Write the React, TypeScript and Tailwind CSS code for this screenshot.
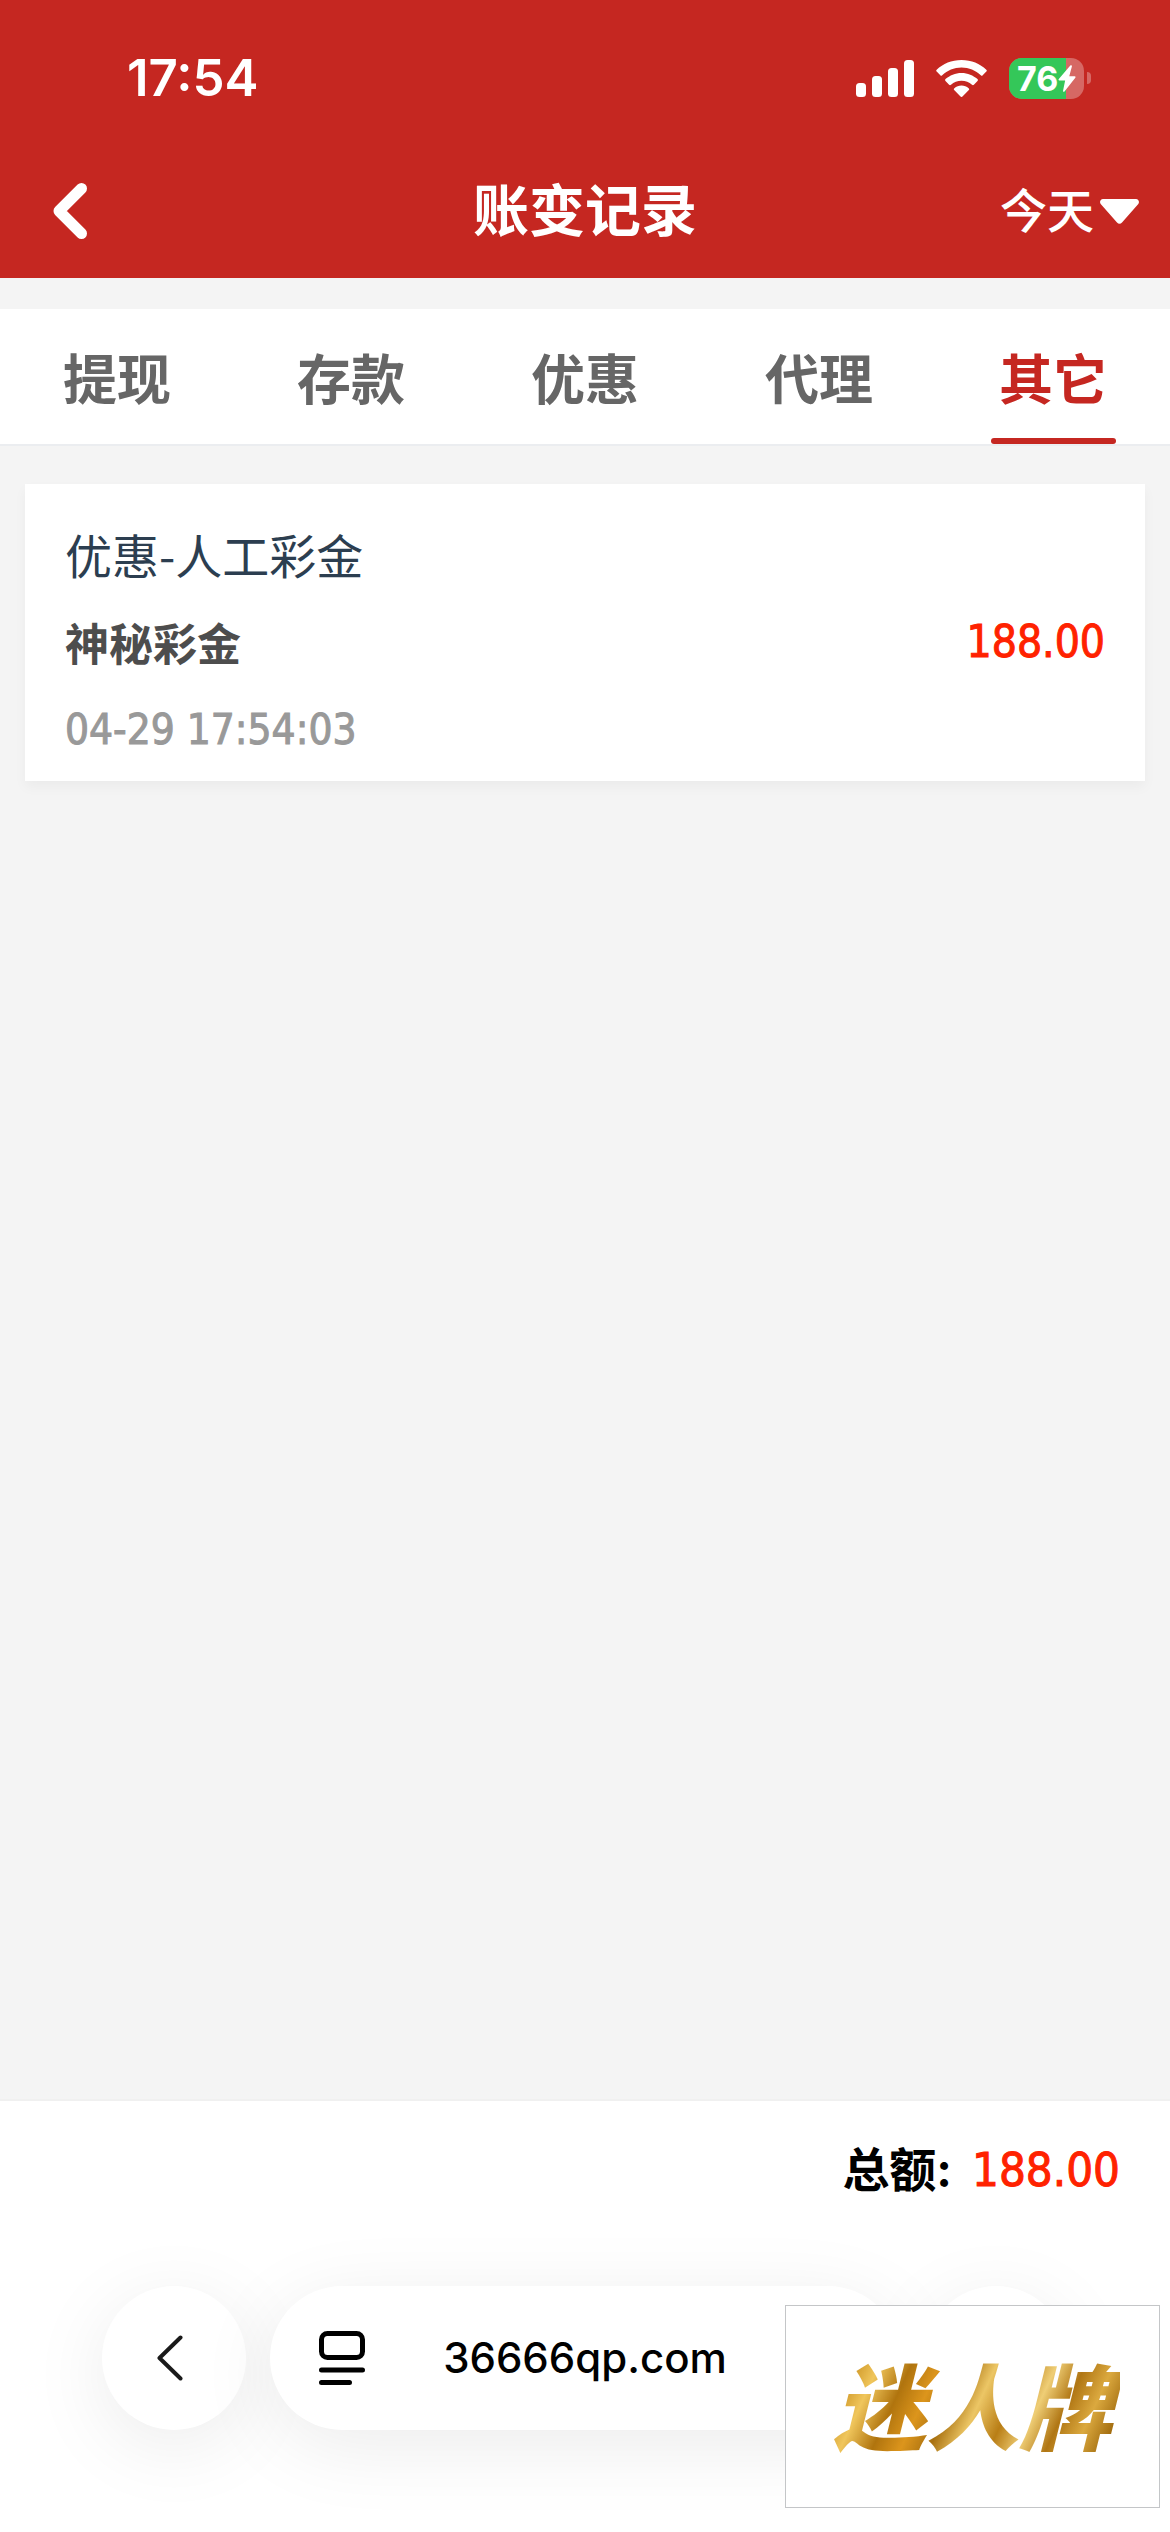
import { useState } from 'react'
import clsx from 'clsx'

const TABS = ['提现', '存款', '优惠', '代理', '其它']

const RECORDS = [
  {
    id: 1,
    type: '优惠-人工彩金',
    title: '神秘彩金',
    time: '04-29 17:54:03',
    amount: 188,
  },
]

const NUMERIC = "font-['DejaVu_Sans_Condensed','DejaVu_Sans',sans-serif]"

function Signal() {
  return (
    <svg width="58" height="37" viewBox="0 0 58 37" fill="#fff" aria-hidden="true">
      <rect x="0" y="23" width="10" height="14" rx="3.5" />
      <rect x="16" y="16" width="10" height="21" rx="3.5" />
      <rect x="32" y="8" width="10" height="29" rx="3.5" />
      <rect x="48" y="0" width="10" height="37" rx="3.5" />
    </svg>
  )
}

function Wifi() {
  return (
    <svg width="51" height="37" viewBox="0 0 51 37" fill="#fff" aria-hidden="true">
      <path d="M25.500 0C35.400 0 44 3.700 50.300 9.700a1.300 1.300 0 0 1 0 1.900l-3.600 3.700a1.300 1.300 0 0 1-1.900 0C39.600 10.300 33 7.400 25.500 7.400S11.400 10.300 6.200 15.300a1.300 1.300 0 0 1-1.900 0L.7 11.600a1.300 1.300 0 0 1 0-1.900C7 3.700 15.600 0 25.500 0z" />
      <path d="M25.500 12.900c6.200 0 11.800 2.400 16 6.200a1.300 1.300 0 0 1 0 1.900l-3.600 3.700a1.400 1.400 0 0 1-1.900 0c-2.800-2.500-6.500-4-10.500-4s-7.700 1.500-10.500 4a1.400 1.400 0 0 1-1.900 0L9.500 21a1.300 1.300 0 0 1 0-1.900c4.200-3.800 9.800-6.200 16-6.200z" />
      <path d="M25.500 25.600c2.700 0 5.200 1 7.100 2.600a1.300 1.300 0 0 1 0 2l-6.100 6.300a1.400 1.400 0 0 1-2 0l-6.100-6.300a1.300 1.300 0 0 1 0-2c1.900-1.600 4.400-2.600 7.100-2.600z" />
    </svg>
  )
}

function Battery({ level }: { level: number }) {
  return (
    <div className="flex items-center gap-[3px]">
      <div className="relative flex h-[41px] w-[75px] items-center overflow-hidden rounded-[13px] bg-white/30 pl-2">
        <div className="absolute inset-y-0 left-0 bg-[#34c759]" style={{ width: `${level}%` }} />
        <span className="relative text-[34px] leading-[41px] font-bold">{level}</span>
        <svg className="relative" width="18" height="27" viewBox="0 0 17 26" fill="#fff" aria-hidden="true">
          <path d="M11.700.6 0.600 13.600c-.5.600-.2 1.300.6 1.300h5.500L4.700 24.700c-.2 1.100.7 1.500 1.400.7L16.500 12.200c.5-.6.200-1.300-.6-1.300h-5.200l2.500-9.500C13.500.3 12.500-.2 11.700.6z" />
        </svg>
      </div>
      <div className="h-3 w-1 rounded-r-full bg-white/30" />
    </div>
  )
}

function StatusBar() {
  return (
    <div className="flex h-36 items-center justify-between pt-3 pr-[79px] pl-[127px]">
      <span className="text-[51px] leading-[60px] font-semibold">17:54</span>
      <div className="flex items-center gap-[22px]">
        <Signal />
        <Wifi />
        <Battery level={76} />
      </div>
    </div>
  )
}

function Header() {
  return (
    <header className="bg-[#c52721] text-white">
      <StatusBar />
      <div className="grid h-[134px] grid-cols-[1fr_auto_1fr] items-center">
        <button type="button" aria-label="返回" className="justify-self-start pl-[53px]">
          <svg width="34" height="56" viewBox="0 0 34 56" fill="none" stroke="#fff" strokeWidth="11" strokeLinecap="round" strokeLinejoin="round">
            <path d="M28.500 5.500 6 28l22.500 22.500" />
          </svg>
        </button>
        <h1 className="text-[56px] leading-[80px] font-bold">账变记录</h1>
        <label className="flex items-center gap-[6px] justify-self-end pr-[31px]">
          <select aria-label="日期" className="appearance-none bg-transparent text-[47px] leading-[68px] font-medium">
            <option>今天</option>
            <option>昨天</option>
          </select>
          <svg width="39" height="25" viewBox="0 0 39 25" fill="#fff" aria-hidden="true">
            <path d="M3 0h33c2.600 0 3.800 3 2.300 5L22 23.500c-1.400 1.600-3.600 1.600-5 0L.7 5C-.8 3 .4 0 3 0z" />
          </svg>
        </label>
      </div>
    </header>
  )
}

function Tabs({ active, onChange }: { active: string; onChange: (tab: string) => void }) {
  return (
    <nav className="mt-[31px] grid grid-cols-5 border-b-2 border-[#ebedf0] bg-white">
      {TABS.map((tab) => (
        <button
          key={tab}
          type="button"
          onClick={() => onChange(tab)}
          className={clsx(
            'flex flex-col items-center pt-8 text-[54px] leading-[80px] font-bold',
            tab === active ? 'text-[#c52721]' : 'text-[#666]',
          )}
        >
          {tab}
          <span className={clsx('mt-[17px] h-[6px] w-[125px] rounded-full', tab === active && 'bg-[#c52721]')} />
        </button>
      ))}
    </nav>
  )
}

function RecordCard({ record }: { record: (typeof RECORDS)[number] }) {
  return (
    <li className="bg-white px-10 pt-[26px] pb-[7px] font-['Noto_Sans_CJK_SC',sans-serif] leading-[88px] shadow-[0_6px_12px_rgba(0,0,0,0.04)]">
      <p className="text-[47px] text-[#2c3e50]">{record.type}</p>
      <div className="flex items-center justify-between">
        <p className="text-[44px] font-bold text-[#4d4d4d]">{record.title}</p>
        <p className={clsx(NUMERIC, 'text-[44px] text-[#ff2200] [-webkit-text-stroke:1px_#ff2200]')}>
          {record.amount.toFixed(2)}
        </p>
      </div>
      <p className={clsx(NUMERIC, 'text-[42px] text-[#999] [-webkit-text-stroke:1px_#999]')}>{record.time}</p>
    </li>
  )
}

function BrowserBar() {
  return (
    <div className="flex gap-6 px-[102px] pt-12 pb-[102px]">
      <button
        type="button"
        aria-label="后退"
        className="flex size-36 items-center justify-center rounded-full bg-white pr-2 shadow-[0_16px_80px_rgba(0,0,0,0.08)]"
      >
        <svg width="26" height="46" viewBox="0 0 26 46" fill="none" stroke="#1a1a1a" strokeWidth="4" strokeLinecap="round" strokeLinejoin="round">
          <path d="M23.500 2.500 2.500 23l21 20.500" />
        </svg>
      </button>
      <div className="flex h-36 min-w-0 flex-1 items-center rounded-full bg-white px-[49px] shadow-[0_16px_80px_rgba(0,0,0,0.08)]">
        <svg className="shrink-0" width="46" height="54" viewBox="0 0 46 54" fill="none" stroke="#000" strokeWidth="5" strokeLinecap="round" aria-hidden="true">
          <rect x="2.500" y="2.500" width="41" height="24" rx="6" />
          <path d="M2.500 39h41M2.500 51.500h28" />
        </svg>
        <input
          type="text"
          aria-label="网址"
          defaultValue="36666qp.com"
          className="mr-[46px] min-w-0 flex-1 bg-transparent text-center text-[42px] leading-[56px] font-medium text-black"
        />
      </div>
      <button
        type="button"
        aria-label="更多"
        className="size-36 rounded-full bg-white shadow-[0_16px_80px_rgba(0,0,0,0.08)]"
      />
    </div>
  )
}

function Watermark() {
  return (
    <div className="absolute right-[10px] bottom-6 flex h-[203px] w-[375px] items-center justify-center border border-[#c4c6c8] bg-white pt-1">
      <span className="bg-[linear-gradient(115deg,#a87312_0%,#c98f1e_10%,#f0c65c_18%,#b0740e_27%,#dc951c_35%,#a8700f_43%,#ecc665_51%,#b97e16_60%,#efce76_68%,#b07614_76%,#dba93f_84%,#9c660a_93%,#cf9a2e_100%)] bg-clip-text px-2 text-[93px] leading-[130px] font-black text-transparent italic">
        迷人牌
      </span>
    </div>
  )
}

export default function App() {
  const [active, setActive] = useState('其它')
  const records = active === '其它' ? RECORDS : []
  const total = records.reduce((sum, r) => sum + r.amount, 0)

  return (
    <div className="flex min-h-screen flex-col bg-[#f4f4f4] font-[Inter,'Noto_Sans_CJK_SC',sans-serif]">
      <Header />
      <Tabs active={active} onChange={setActive} />
      <main className="flex-1 px-[25px] pt-[38px]">
        <ul className="flex flex-col gap-6">
          {records.map((record) => (
            <RecordCard key={record.id} record={record} />
          ))}
        </ul>
      </main>
      <footer className="relative overflow-hidden border-t-2 border-[#f0f0f0] bg-white">
        <p className="flex items-center justify-end gap-5 pr-[50px] text-[47px] leading-[137px]">
          <span className="font-bold text-black">总额:</span>
          <span className={clsx(NUMERIC, 'text-[#ff2200] [-webkit-text-stroke:1px_#ff2200]')}>{total.toFixed(2)}</span>
        </p>
        <BrowserBar />
        <Watermark />
      </footer>
    </div>
  )
}
